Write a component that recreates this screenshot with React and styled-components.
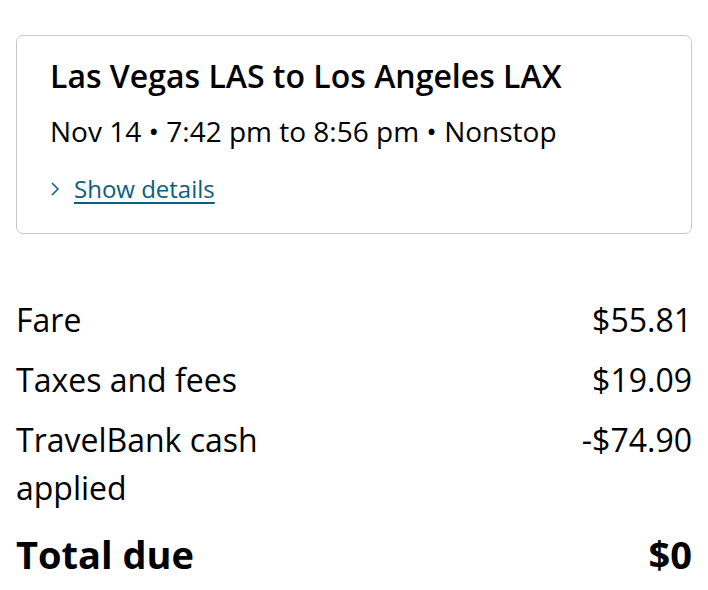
import React from "react";
import styled, { createGlobalStyle } from "styled-components";

const GlobalStyle = createGlobalStyle`
  body {
    margin: 0;
    background: #ffffff;
    font-family: "Open Sans", "Noto Sans", sans-serif;
    color: #000000;
  }
`;

const Page = styled.div`
  padding: 35px 16px 0 16px;
`;

const Card = styled.section`
  border: 1.5px solid #c9c9c9;
  border-radius: 7px;
  padding: 20px 33px 27px 33px;
`;

const Title = styled.h2`
  margin: 0;
  font-size: 32px;
  font-weight: 600;
  line-height: 40px;
`;

const Schedule = styled.p`
  margin: 16px 0 0 0;
  font-size: 28px;
  line-height: 38px;
`;

const DetailsLink = styled.a`
  display: inline-flex;
  align-items: center;
  gap: 14px;
  margin-top: 22px;
  font-size: 24px;
  line-height: 34px;
  color: #0b5e7e;
  cursor: pointer;

  span {
    text-decoration: underline;
    text-decoration-thickness: 1.5px;
    text-underline-offset: 4px;
  }
`;

const Summary = styled.div`
  margin-top: 62px;
  display: flex;
  flex-direction: column;
  gap: 12px;
`;

const Row = styled.div`
  display: flex;
  justify-content: space-between;
  align-items: flex-start;
  font-size: ${(p) => (p.total ? "38px" : "32px")};
  font-weight: ${(p) => (p.total ? 700 : 400)};
  line-height: ${(p) => (p.total ? "52px" : "48px")};
  margin-top: ${(p) => (p.total ? "4px" : "0")};
`;

const Label = styled.span`
  max-width: 320px;
`;

const Amount = styled.span`
  text-align: right;
`;

const Chevron = () => (
  <svg width="10" height="16" viewBox="0 0 10 16" fill="none">
    <path d="M2 2l6 6-6 6" stroke="#0b5e7e" strokeWidth="1.5" />
  </svg>
);

const rows = [
  { label: "Fare", amount: "$55.81" },
  { label: "Taxes and fees", amount: "$19.09" },
  { label: "TravelBank cash applied", amount: "-$74.90" },
];

export default function App() {
  return (
    <Page>
      <GlobalStyle />
      <Card>
        <Title>Las Vegas LAS to Los Angeles LAX</Title>
        <Schedule>Nov 14 • 7:42 pm to 8:56 pm • Nonstop</Schedule>
        <DetailsLink>
          <Chevron />
          <span>Show details</span>
        </DetailsLink>
      </Card>
      <Summary>
        {rows.map((r) => (
          <Row key={r.label}>
            <Label>{r.label}</Label>
            <Amount>{r.amount}</Amount>
          </Row>
        ))}
        <Row total>
          <span>Total due</span>
          <Amount>$0</Amount>
        </Row>
      </Summary>
    </Page>
  );
}
